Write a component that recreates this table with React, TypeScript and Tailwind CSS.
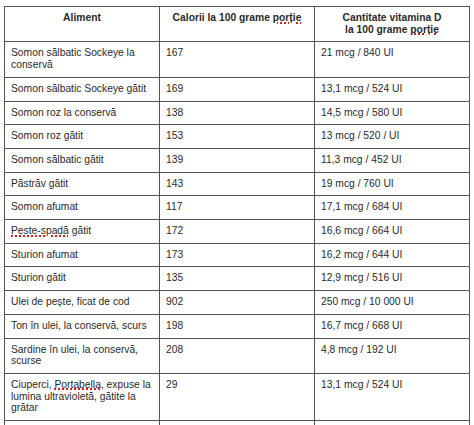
import React from "react";

const wavy = "underline decoration-dotted decoration-[#d02020] decoration-[1.5px] underline-offset-[1px]";

const rows: [React.ReactNode, string, string][] = [
  ["Somon sălbatic Sockeye la conservă", "167", "21 mcg / 840 UI"],
  ["Somon sălbatic Sockeye gătit", "169", "13,1 mcg / 524 UI"],
  ["Somon roz la conservă", "138", "14,5 mcg / 580 UI"],
  ["Somon roz gătit", "153", "13 mcg / 520 / UI"],
  ["Somon sălbatic gătit", "139", "11,3 mcg / 452 UI"],
  ["Păstrăv gătit", "143", "19 mcg / 760 UI"],
  ["Somon afumat", "117", "17,1 mcg / 684 UI"],
  [
    <>
      <span className={wavy}>Peste-spadă</span> gătit
    </>,
    "172",
    "16,6 mcg / 664 UI",
  ],
  ["Sturion afumat", "173", "16,2 mcg / 644 UI"],
  ["Sturion gătit", "135", "12,9 mcg / 516 UI"],
  ["Ulei de pește, ficat de cod", "902", "250 mcg / 10 000 UI"],
  ["Ton în ulei, la conservă, scurs", "198", "16,7 mcg / 668 UI"],
  ["Sardine în ulei, la conservă, scurse", "208", "4,8 mcg / 192 UI"],
  [
    <>
      Ciuperci, <span className={wavy}>Portabella</span>, expuse la lumina ultravioletă, gătite la grătar
    </>,
    "29",
    "13,1 mcg / 524 UI",
  ],
  ["\u00a0", "\u00a0", "\u00a0"],
];

const cell = "border border-[#555555] align-top px-[6px] pt-[5px] pb-[6px]";

export default function App() {
  return (
    <div
      className="w-[474px] h-[425px] overflow-hidden bg-white text-[#2a2a2a]"
      style={{ fontFamily: '"Liberation Sans", Arial, sans-serif' }}
    >
      <table className="ml-[4px] mt-[6px] w-[465px] table-fixed border-collapse text-[10.3px] leading-[11.7px]">
        <colgroup>
          <col className="w-[155px]" />
          <col className="w-[155px]" />
          <col className="w-[155px]" />
        </colgroup>
        <thead>
          <tr>
            <th className={`${cell} text-center font-bold`}>Aliment</th>
            <th className={`${cell} text-center font-bold`}>
              Calorii la 100 grame <span className={wavy}>porție</span>
            </th>
            <th className={`${cell} text-center font-bold`}>
              Cantitate vitamina D
              <br />
              la 100 grame <span className={wavy}>porție</span>
            </th>
          </tr>
        </thead>
        <tbody>
          {rows.map((r, i) => (
            <tr key={i}>
              <td className={cell}>{r[0]}</td>
              <td className={cell}>{r[1]}</td>
              <td className={cell}>{r[2]}</td>
            </tr>
          ))}
        </tbody>
      </table>
    </div>
  );
}
